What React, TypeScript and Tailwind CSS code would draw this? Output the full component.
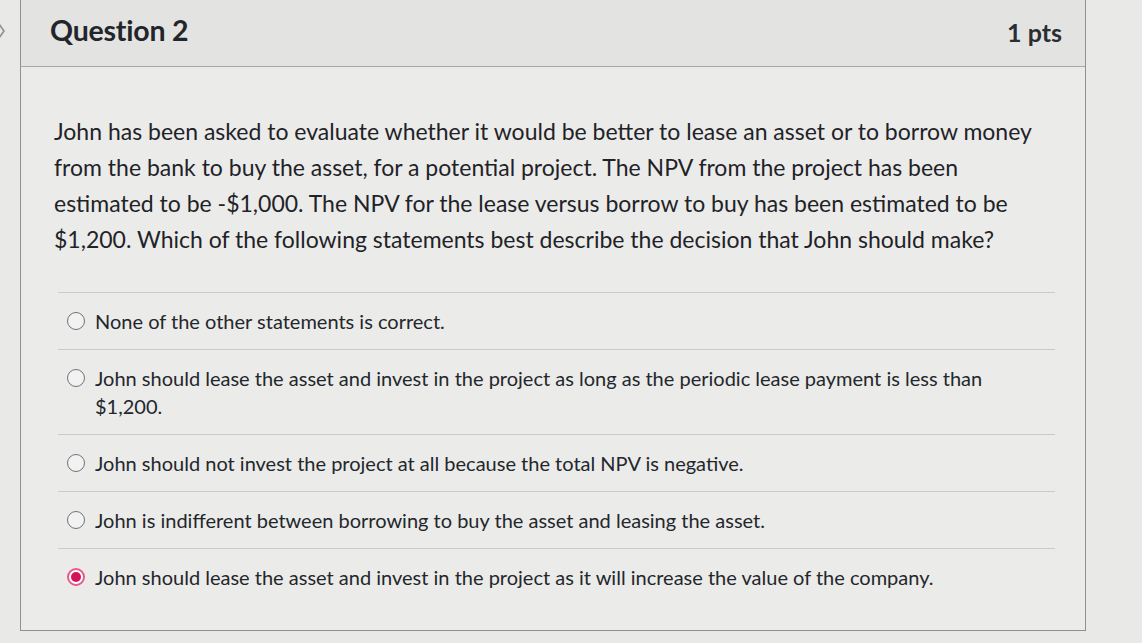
import { useState } from 'react'

const answers = [
  'None of the other statements is correct.',
  'John should lease the asset and invest in the project as long as the periodic lease payment is less than $1,200.',
  'John should not invest the project at all because the total NPV is negative.',
  'John is indifferent between borrowing to buy the asset and leasing the asset.',
  'John should lease the asset and invest in the project as it will increase the value of the company.',
]

function Radio({ checked }: { checked: boolean }) {
  if (checked) {
    return (
      <span className="mt-[5px] w-[18px] h-[18px] shrink-0 rounded-full border-2 border-[#e8588a] bg-white flex items-center justify-center">
        <span className="w-[10px] h-[10px] rounded-full bg-[#d3125a]" />
      </span>
    )
  }
  return <span className="mt-[5px] w-[18px] h-[18px] shrink-0 rounded-full border-[1.5px] border-[#6f7478] bg-[#f2f2f2]" />
}

export default function App() {
  const [picked, setPicked] = useState(4)

  return (
    <div className="w-[1142px] h-[643px] overflow-hidden bg-[#e9e9e8] flex text-[#2d3b45]" style={{ fontFamily: 'Lato, "Noto Sans", sans-serif' }}>
      <div className="w-[20px] shrink-0 pt-[22px]">
        <svg width="8" height="18" viewBox="0 0 8 18" className="-ml-[2px]">
          <path d="M1 2 L6 9 L1 16" fill="none" stroke="#8d9092" strokeWidth="1.6" />
        </svg>
      </div>
      <div className="w-[1066px] h-[631px] shrink-0 border border-t-0 border-[#8f9294] bg-[#ebebea] flex flex-col">
        <div className="h-[67px] shrink-0 bg-[#e3e3e2] border-b border-[#a6a8aa] flex items-center justify-between pl-[29px] pr-[23px]">
          <h2 className="text-[28.5px] font-bold text-[#22262a] tracking-[-0.2px] -mt-[5px]">Question 2</h2>
          <span className="text-[25px] font-bold text-[#2a2e32] -mt-[1px]">1 pts</span>
        </div>
        <div className="pt-[46px] pl-[33px] pr-[30px]">
          <p className="text-[23px] leading-[36px] text-[#1f2327]">
            John has been asked to evaluate whether it would be better to lease an asset or to borrow money from the bank to buy the asset, for a potential project. The NPV from the project has been estimated to be -$1,000. The NPV for the lease versus borrow to buy has been estimated to be $1,200. Which of the following statements best describe the decision that John should make?
          </p>
          <div className="mt-[35px] ml-[4px] mr-[0px]">
            {answers.map((a, i) => (
              <div
                key={i}
                onClick={() => setPicked(i)}
                className="border-t border-[#c9cacb] flex items-start gap-[10px] pl-[9px] py-[14px] cursor-pointer"
              >
                <Radio checked={picked === i} />
                <span className="text-[20px] leading-[28px] text-[#23272b] max-w-[900px]">{a}</span>
              </div>
            ))}
          </div>
        </div>
      </div>
    </div>
  )
}
